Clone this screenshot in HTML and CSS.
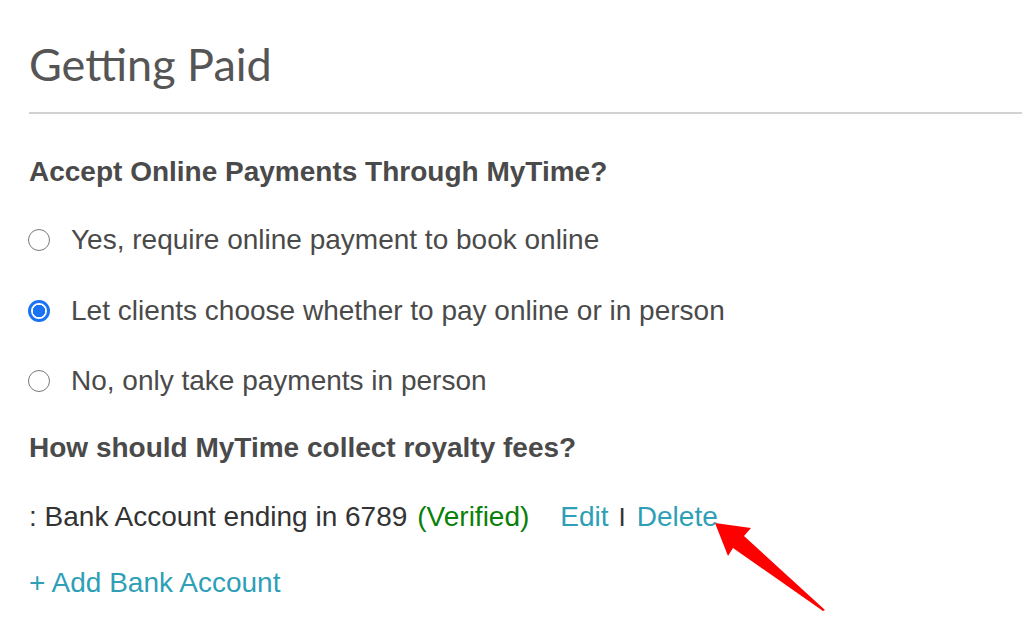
FILE: index.html
```html
<!DOCTYPE html>
<html>
<head>
<meta charset="utf-8">
<link rel="stylesheet" href="styles.css">
</head>
<body>
<div class="page">
  <h1 class="title">Getting Paid</h1>
  <div class="rule"></div>
  <h2 class="question q1">Accept Online Payments Through MyTime?</h2>
  <div class="options">
    <label class="option"><span class="radio"></span><span>Yes, require online payment to book online</span></label>
    <label class="option"><span class="radio checked"></span><span>Let clients choose whether to pay online or in person</span></label>
    <label class="option"><span class="radio"></span><span>No, only take payments in person</span></label>
  </div>
  <h2 class="question q2">How should MyTime collect royalty fees?</h2>
  <div class="bank">
    <span class="bank-name">: Bank Account ending in 6789</span>
    <span class="verified">(Verified)</span>
    <span class="actions"><a class="link">Edit</a><span class="sep">I</span><a class="link">Delete</a></span>
  </div>
  <a class="link add">+ Add Bank Account</a>
  <svg class="arrow" width="130" height="110" viewBox="0 0 130 110"><polygon points="15,18 51,23 44,31 125,105 123,106 33,43 28,51" fill="#ff0000"/></svg>
</div>
</body>
</html>
```
FILE: styles.css
```css
html, body {
  margin: 0;
  padding: 0;
  background: #ffffff;
}
.page {
  position: relative;
  box-sizing: border-box;
  min-height: 638px;
  padding: 38px 0 0 29px;
  font-family: "Liberation Sans", Arial, sans-serif;
  color: #4a4a4a;
}
.title {
  margin: 0;
  font-family: Lato, "Open Sans", sans-serif;
  font-weight: 400;
  font-size: 45px;
  line-height: 52px;
  color: #555555;
}
.rule {
  height: 2px;
  background: #d2d2d2;
  margin-top: 22px;
}
.question {
  margin: 0;
  font-size: 28px;
  font-weight: bold;
  line-height: 32px;
  color: #4a4a4a;
}
.q1 {
  margin-top: 42px;
}
.options {
  display: flex;
  flex-direction: column;
  gap: 38.5px;
  margin-top: 36px;
}
.option {
  display: flex;
  align-items: center;
  gap: 22px;
  font-size: 28px;
  line-height: 32px;
  color: #4a4a4a;
}
.radio {
  width: 22px;
  height: 22px;
  box-sizing: border-box;
  border: 1.5px solid #7a7a7a;
  border-radius: 50%;
  flex: none;
  margin-left: -1px;
  margin-right: -1px;
}
.radio.checked {
  border: 3px solid #1a73f5;
  background: radial-gradient(circle, #1a73f5 0 6px, #ffffff 6.5px);
}
.q2 {
  margin-top: 35px;
}
.bank {
  display: flex;
  align-items: baseline;
  margin-top: 37px;
  font-size: 28px;
  line-height: 32px;
}
.bank-name {
  color: #333333;
}
.verified {
  color: #098009;
  margin-left: 10px;
}
.actions {
  margin-left: 31px;
  display: flex;
  align-items: baseline;
}
.sep {
  color: #333333;
  margin: 0 11px 0 10px;
  font-size: 26px;
}
.link {
  color: #2e9fb6;
  text-decoration: none;
}
.arrow {
  position: absolute;
  left: 700px;
  top: 505px;
  display: block;
}
.add {
  display: block;
  margin-top: 34px;
  font-size: 28px;
  line-height: 32px;
}
```
